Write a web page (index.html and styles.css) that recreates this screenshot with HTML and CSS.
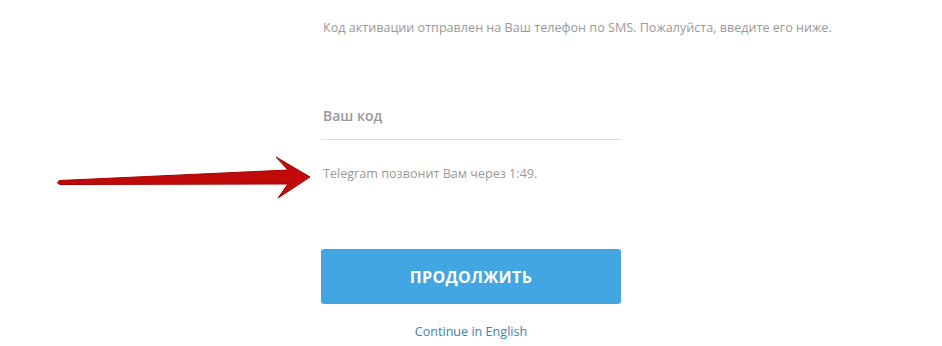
FILE: index.html
```html
<!DOCTYPE html>
<html lang="ru">
<head>
    <meta charset="UTF-8">
    <meta name="viewport" content="width=device-width, initial-scale=1.0">
    <title>Telegram</title>
    <link rel="stylesheet" href="styles.css">
</head>
<body>
    <section class="login">
        <p class="desc">Код активации отправлен на Ваш телефон по SMS. Пожалуйста, введите его ниже.</p>
        <div class="field">
            <input class="field-input" type="text" placeholder="Ваш код">
        </div>
        <p class="call-info">Telegram позвонит Вам через 1:49.</p>
        <button class="btn-next">ПРОДОЛЖИТЬ</button>
        <a class="link-lang" href="#">Continue in English</a>
    </section>

    <!-- стрелка поверх страницы -->
    <svg class="arrow" width="320" height="60" viewBox="0 0 320 60">
        <path d="M60 33.5 L288 23 L276 10 L310 30 L278 51 L288 37 L60 37.5 Q55 35.5 60 33.5 Z" fill="#c00a0a" stroke="#a80000" stroke-width="1" stroke-linejoin="round"/>
    </svg>
</body>
</html>
```

FILE: styles.css
```css
*{
    box-sizing: border-box;
    padding: 0;
    margin: 0;
}
body{
    background-color: #fff;
    font-family: "Open Sans", "Noto Sans", sans-serif;
    color: #999;
}
.login{
    width: 300px;
    margin: 0 auto;
    padding-top: 19px;
    display: flex;
    flex-direction: column;
}
.desc{
    font-size: 12.6px;
    line-height: 18px;
    white-space: nowrap;
    padding-left: 2px;
}
.field{
    margin-top: 60px;
    border-bottom: 1px solid #dcdcdc;
}
.field-input{
    width: 100%;
    border: 0;
    outline: none;
    font-family: inherit;
    font-size: 14px;
    font-weight: 600;
    color: #999;
    padding: 9px 2px 13px;
    line-height: 20px;
}
.field-input::placeholder{
    color: #999;
}
.call-info{
    margin-top: 25px;
    font-size: 12.6px;
    line-height: 18px;
    padding-left: 2px;
}
.btn-next{
    margin-top: 66px;
    height: 55px;
    border: 0;
    border-radius: 3px;
    background-color: #41a6e1;
    color: #fff;
    font-family: inherit;
    font-size: 16px;
    font-weight: 700;
    letter-spacing: 0.3px;
}
.link-lang{
    margin-top: 19px;
    text-align: center;
    font-size: 12.6px;
    line-height: 18px;
    color: #3b83ab;
    text-decoration: none;
}
.arrow{
    position: absolute;
    left: 0;
    top: 147px;
}
```
